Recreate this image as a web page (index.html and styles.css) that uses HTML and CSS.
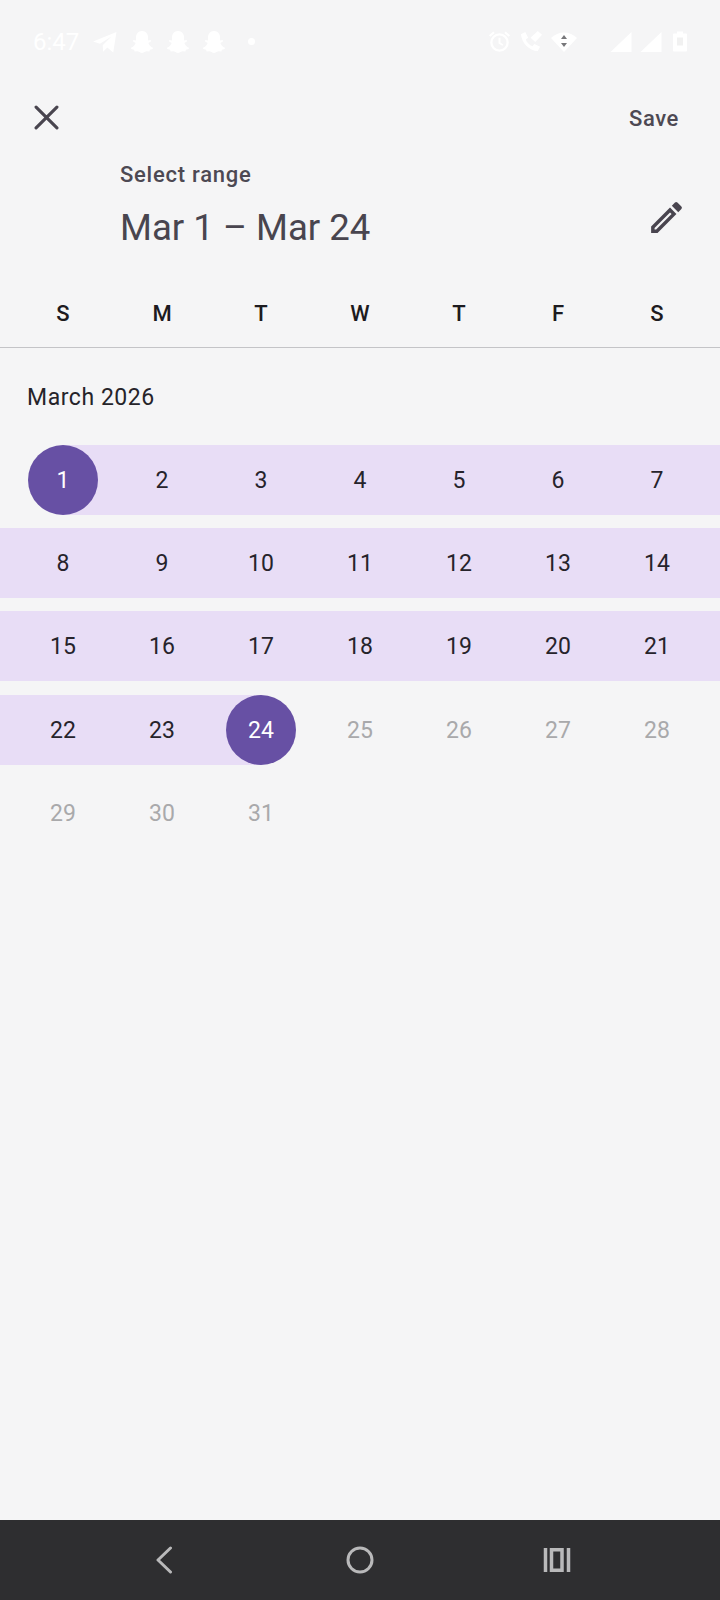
FILE: index.html
```html
<!DOCTYPE html>
<html lang="en">

<head>
  <meta charset="UTF-8">
  <meta name="viewport" content="width=device-width, initial-scale=1.0">
  <title>Select range</title>
  <link rel="stylesheet" href="styles.css">
</head>

<body>
  <div class="page">
    <div class="status">
      <div class="status-left">
        <span class="clock">6:47</span>
        <svg class="st-tg" viewBox="0 0 26 24"><path d="M0 11.500 25.500 1 22 23.500 15.500 18 11 22.500 10.500 15.500 20 6 7.500 14z"/></svg>
        <svg class="st-snap" viewBox="0 0 24 24"><path d="M12 1c4 0 6 3 6 6.500v3l2.600-.6.600 1.400-2.800 1.600c.6 2.200 2.200 3.800 4.600 4.800l-.3 1.300-2.800.7-.5 1.800-3-.2C14.500 22 13.500 23 12 23s-2.500-1-4.400-1.700l-3 .2-.5-1.800-2.800-.7-.3-1.300c2.400-1 4-2.600 4.600-4.800L2.800 11.300l.6-1.400 2.600.6v-3C6 4 8 1 12 1z"/></svg>
        <svg class="st-snap" viewBox="0 0 24 24"><path d="M12 1c4 0 6 3 6 6.500v3l2.600-.6.600 1.400-2.800 1.600c.6 2.200 2.200 3.800 4.600 4.800l-.3 1.300-2.800.7-.5 1.800-3-.2C14.500 22 13.500 23 12 23s-2.500-1-4.400-1.700l-3 .2-.5-1.800-2.800-.7-.3-1.300c2.400-1 4-2.600 4.600-4.800L2.800 11.300l.6-1.400 2.600.6v-3C6 4 8 1 12 1z"/></svg>
        <svg class="st-snap" viewBox="0 0 24 24"><path d="M12 1c4 0 6 3 6 6.500v3l2.600-.6.600 1.400-2.800 1.600c.6 2.200 2.200 3.800 4.600 4.800l-.3 1.300-2.800.7-.5 1.800-3-.2C14.500 22 13.500 23 12 23s-2.500-1-4.400-1.700l-3 .2-.5-1.800-2.800-.7-.3-1.300c2.400-1 4-2.600 4.600-4.800L2.800 11.300l.6-1.400 2.600.6v-3C6 4 8 1 12 1z"/></svg>
        <span class="st-dot"></span>
      </div>
      <div class="status-right">
        <svg class="st-alarm" viewBox="0 0 24 24"><circle cx="12" cy="13" r="8.500" fill="none" stroke="#fff" stroke-width="2.400"/><path d="M1 5.500 5.500 1.500 7 3 2.500 7zM23 5.500 18.500 1.500 17 3 21.500 7zM11 8h2v5l3 2-1 1.500-4-2.500z"/></svg>
        <svg class="st-call" viewBox="0 0 24 24"><path d="M1 4.500 5.500 2l3 6-2.500 2c1 3 4 6 7 7l2-2.500 6 3-2.500 4.500C9.500 22 1.500 13 1 4.500z"/><path d="M11 8 18.500 1l4.500 4-7 7.500z"/></svg>
        <svg class="st-wifi" viewBox="0 0 26 20"><path d="M0 6C7-1.500 19-1.500 26 6L13 20z"/><path fill="#77777a" d="M13 3l3 4h-6zM13 15l-3-4h6z"/></svg>
        <svg class="st-signal" viewBox="0 0 21 20"><path d="M21 0v20H0z"/></svg>
        <svg class="st-signal" viewBox="0 0 21 20"><path d="M21 0v20H0z"/></svg>
        <svg class="st-batt" viewBox="0 0 14 20"><path d="M4 0h6v2h3c.6 0 1 .4 1 1v16c0 .6-.4 1-1 1H1c-.6 0-1-.4-1-1V3c0-.6.4-1 1-1h3z"/><path fill="#f1f1f1" d="M4 6h6v8H4z"/></svg>
      </div>
    </div>

    <div class="toolbar">
      <svg class="close" viewBox="0 0 24 24"><path d="M2 2 22 22M22 2 2 22"/></svg>
      <span class="save">Save</span>
    </div>

    <div class="heading">
      <div class="label">Select range</div>
      <div class="range-row">
        <div class="range">Mar 1 – Mar 24</div>
        <svg class="edit" viewBox="0 0 24 24"><path d="M3 17.250V21h3.750L17.810 9.940l-3.750-3.750L3 17.250zM5.920 19H5v-.920l9.060-9.060.920.920L5.920 19zM20.710 7.040a1 1 0 0 0 0-1.410l-2.340-2.340a1 1 0 0 0-1.410 0l-1.830 1.830 3.750 3.750 1.830-1.830z"/></svg>
      </div>
    </div>

    <div class="weekdays">
      <span>S</span><span>M</span><span>T</span><span>W</span><span>T</span><span>F</span><span>S</span>
    </div>

    <div class="month">March 2026</div>

    <div class="weeks">
      <div class="week band-from-first">
        <span class="day picked">1</span><span class="day">2</span><span class="day">3</span><span class="day">4</span><span class="day">5</span><span class="day">6</span><span class="day">7</span>
      </div>
      <div class="week band">
        <span class="day">8</span><span class="day">9</span><span class="day">10</span><span class="day">11</span><span class="day">12</span><span class="day">13</span><span class="day">14</span>
      </div>
      <div class="week band">
        <span class="day">15</span><span class="day">16</span><span class="day">17</span><span class="day">18</span><span class="day">19</span><span class="day">20</span><span class="day">21</span>
      </div>
      <div class="week band-to-third">
        <span class="day">22</span><span class="day">23</span><span class="day picked">24</span><span class="day off">25</span><span class="day off">26</span><span class="day off">27</span><span class="day off">28</span>
      </div>
      <div class="week">
        <span class="day off">29</span><span class="day off">30</span><span class="day off">31</span>
      </div>
    </div>

    <div class="navbar">
      <svg class="nav-back" viewBox="0 0 18 28"><path d="M15.500 2 3 14l12.500 12"/></svg>
      <svg class="nav-home" viewBox="0 0 28 28"><circle cx="14" cy="14" r="12"/></svg>
      <svg class="nav-recent" viewBox="0 0 28 26"><path d="M2.500 1v24M8.500 2.800h10.500v20.400H8.500zM25.500 1v24"/></svg>
    </div>
  </div>
</body>

</html>
```

FILE: styles.css
```css
body, html {
  margin: 0;
  padding: 0;
}

body {
  font-family: Roboto, sans-serif;
  background-color: #f5f5f6;
}

.page {
  width: 720px;
  height: 1600px;
  display: flex;
  flex-direction: column;
  overflow: hidden;
}

/* status bar, white on light like the app draws it */
.status {
  height: 82px;
  flex: none;
  display: flex;
  justify-content: space-between;
  align-items: center;
  padding: 1px 33px 0 33px;
  box-sizing: border-box;
}

.status svg {
  fill: #fff;
  display: block;
}

.status-left, .status-right {
  display: flex;
  align-items: center;
}

.clock {
  color: #fff;
  font-size: 24px;
  width: 60px;
  padding-top: 1px;
}

.st-tg {
  width: 24px;
  height: 22px;
  margin-right: 13px;
}

.st-snap {
  width: 24px;
  height: 24px;
  margin-right: 12px;
}

.st-dot {
  width: 7px;
  height: 7px;
  border-radius: 50%;
  background-color: #fff;
  margin-left: 10px;
}

.st-alarm {
  width: 23px;
  height: 23px;
  margin-right: 9px;
}

.st-call {
  width: 23px;
  height: 23px;
  margin-right: 8px;
}

.st-wifi {
  width: 26px;
  height: 20px;
  margin-right: 33px;
}

.st-signal {
  width: 22px;
  height: 20px;
  margin-right: 8px;
}

.st-batt {
  width: 14px;
  height: 21px;
  margin-left: 3px;
}

.toolbar {
  height: 70px;
  flex: none;
  display: flex;
  justify-content: space-between;
  align-items: center;
  padding: 0 41px 0 34px;
}

.close {
  width: 25px;
  height: 25px;
  fill: none;
  stroke: #49454f;
  stroke-width: 3;
  stroke-linecap: round;
}

.save {
  color: #4d4953;
  font-size: 22px;
  font-weight: 500;
  line-height: 30px;
  letter-spacing: .6px;
  margin-bottom: -4px;
}

.heading {
  flex: none;
  height: 141px;
  padding-left: 120px;
  padding-right: 33px;
  box-sizing: border-box;
  padding-top: 8px;
}

.label {
  color: #4d4953;
  font-size: 22px;
  font-weight: 500;
  line-height: 30px;
  letter-spacing: .75px;
}

.range-row {
  display: flex;
  justify-content: space-between;
  align-items: flex-start;
  margin-top: 13px;
}

.range {
  color: #49454f;
  font-size: 36.600px;
  line-height: 50px;
}

.edit {
  width: 41px;
  height: 41px;
  fill: #49454f;
  margin-top: -6px;
}

.weekdays {
  flex: none;
  display: grid;
  grid-template-columns: repeat(7, 99px);
  padding: 1px 13.500px 0;
  height: 53px;
  line-height: 40px;
  border-bottom: 1px solid #c4c4c7;
  text-align: center;
  color: #1d1b20;
  font-size: 22px;
  font-weight: 500;
}

.month {
  flex: none;
  color: #26242a;
  font-size: 23px;
  line-height: 30px;
  letter-spacing: .55px;
  padding: 35px 0 0 27px;
  height: 65px;
  box-sizing: border-box;
}

.weeks {
  flex: 1;
  padding-top: 32px;
  display: flex;
  flex-direction: column;
  gap: 13.200px;
}

.week {
  display: grid;
  grid-template-columns: repeat(7, 99px);
  padding: 0 13.500px;
  height: 70px;
}

.band {
  background-color: #e8ddf6;
}

.band-from-first {
  background: linear-gradient(to right, transparent 63px, #e8ddf6 63px);
}

.band-to-third {
  background: linear-gradient(to right, #e8ddf6 261px, transparent 261px);
}

.day {
  width: 70px;
  height: 70px;
  justify-self: center;
  display: flex;
  justify-content: center;
  align-items: center;
  border-radius: 50%;
  color: #26232b;
  font-size: 23px;
  padding-top: 1px;
  box-sizing: border-box;
}

.off {
  color: #a9a9ab;
}

.picked {
  background-color: #6750a4;
  color: #fff;
}

.navbar {
  height: 80px;
  flex: none;
  background-color: #2e2e30;
  display: grid;
  grid-template-columns: repeat(3, 196.500px);
  justify-content: center;
  align-items: center;
  justify-items: center;
}

.navbar svg {
  fill: none;
  stroke: #b9b9ba;
  stroke-width: 3;
  display: block;
}

.nav-back {
  width: 18px;
  height: 28px;
  stroke-linecap: round;
  stroke-linejoin: round;
}

.nav-home {
  width: 28px;
  height: 28px;
}

.nav-recent {
  width: 28px;
  height: 26px;
  stroke-width: 3.500px !important;
}
```
